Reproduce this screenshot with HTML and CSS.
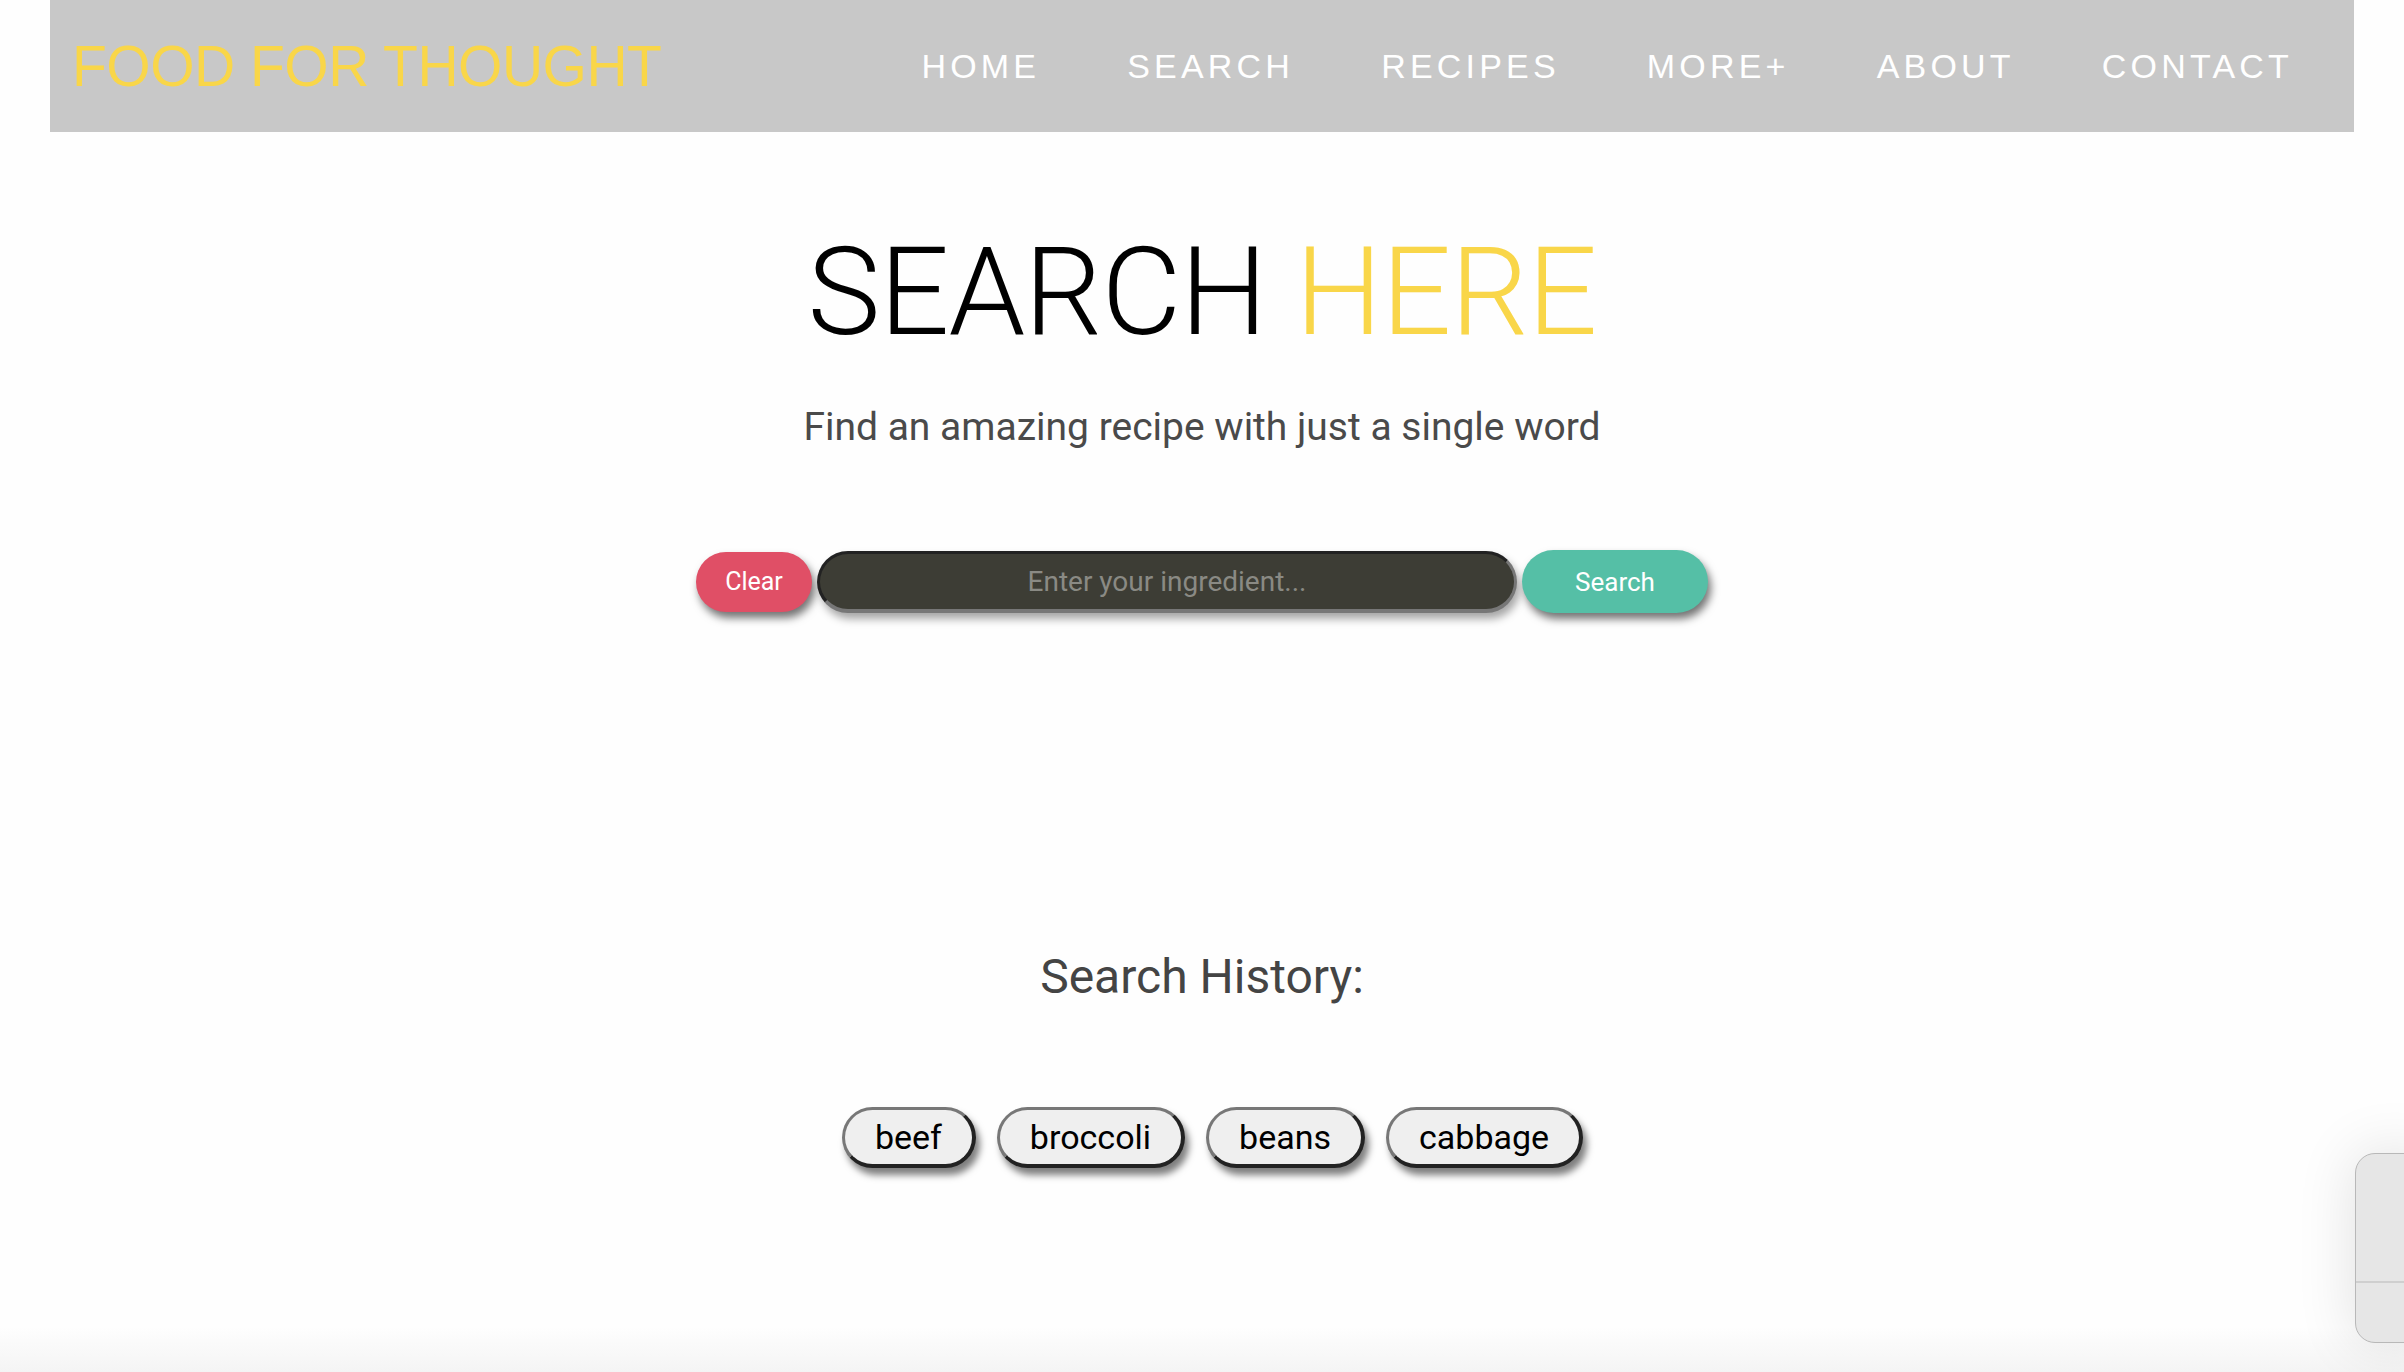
FILE: index.html
```html
<!DOCTYPE html>
<html lang="en">
<head>
<meta charset="utf-8">
<title>Food For Thought - Search</title>
<link rel="stylesheet" href="styles.css">
</head>
<body>
<header class="topbar">
  <div class="logo">FOOD FOR THOUGHT</div>
  <nav class="nav">
    <a class="nav-link" href="#">HOME</a>
    <a class="nav-link" href="#">SEARCH</a>
    <a class="nav-link" href="#">RECIPES</a>
    <a class="nav-link" href="#">MORE+</a>
    <a class="nav-link" href="#">ABOUT</a>
    <a class="nav-link" href="#">CONTACT</a>
  </nav>
</header>
<main class="hero">
  <h1 class="title">SEARCH <span class="accent">HERE</span></h1>
  <p class="subtitle">Find an amazing recipe with just a single word</p>
  <div class="search-row">
    <button class="btn btn-clear">Clear</button>
    <input class="search-input" type="text" placeholder="Enter your ingredient...">
    <button class="btn btn-search">Search</button>
  </div>
  <h2 class="history-title">Search History:</h2>
  <div class="chips">
    <button class="chip">beef</button>
    <button class="chip">broccoli</button>
    <button class="chip">beans</button>
    <button class="chip">cabbage</button>
  </div>
</main>
<div class="side-panel"><div class="side-panel-divider"></div></div>
</body>
</html>
```
FILE: styles.css
```css
* { box-sizing: border-box; }
html, body { margin: 0; padding: 0; }
body {
  min-height: 100vh;
  background: linear-gradient(to bottom, #fefefe calc(100% - 45px), #f4f4f4 100%);
  font-family: Roboto, "Liberation Sans", sans-serif;
  overflow: hidden;
}
.topbar {
  margin: 0 50px;
  height: 132px;
  background: #c8c8c8;
  display: flex;
  align-items: center;
  justify-content: space-between;
  padding: 0 61px 0 22px;
}
.logo {
  font-family: "Liberation Sans", Arial, sans-serif;
  font-size: 57px;
  color: #f9d649;
  letter-spacing: -0.5px;
}
.nav {
  display: flex;
  gap: 87px;
}
.nav-link {
  font-family: "Liberation Sans", Arial, sans-serif;
  font-size: 34px;
  letter-spacing: 4.2px;
  color: #ffffff;
  text-decoration: none;
}
.hero {
  display: flex;
  flex-direction: column;
  align-items: center;
}
.title {
  margin: 99px 0 0;
  font-family: Roboto, sans-serif;
  font-weight: 300;
  font-size: 123px;
  line-height: 1;
  color: #000;
  letter-spacing: -1px;
}
.accent { color: #f9d649; }
.subtitle {
  margin: 50px 0 0;
  font-family: Roboto, sans-serif;
  font-size: 39px;
  color: #4a4a4a;
}
.search-row {
  margin-top: 100px;
  display: flex;
  align-items: center;
  gap: 5px;
}
.btn {
  border: none;
  border-radius: 32px;
  color: #fff;
  font-family: Roboto, sans-serif;
  font-size: 25px;
  box-shadow: 3px 6px 8px rgba(0, 0, 0, 0.55);
}
.btn-clear {
  width: 116px;
  height: 60px;
  background: #e04f66;
}
.btn-search {
  width: 186px;
  height: 63px;
  font-size: 26px;
  background: #55bfa6;
}
.search-input {
  width: 700px;
  height: 62px;
  border-radius: 32px;
  border-style: solid;
  border-width: 3px 3px 4px 3px;
  border-color: #222 #777 #777 #222;
  background: #3d3d35;
  color: #ddd;
  font-family: Roboto, sans-serif;
  font-size: 28px;
  text-align: center;
  box-shadow: 3px 6px 8px rgba(0, 0, 0, 0.35);
  outline: none;
}
.search-input::placeholder { color: #8a8a84; }
.history-title {
  margin: 335px 0 0;
  font-family: Roboto, sans-serif;
  font-weight: 400;
  font-size: 48px;
  color: #444;
}
.chips {
  margin-top: 102px;
  padding-left: 21px;
  display: flex;
  gap: 21px;
}
.chip {
  height: 61px;
  padding: 0 30px;
  border-radius: 32px;
  border-style: solid;
  border-width: 3px 4px 4px 3px;
  border-color: #777 #222 #222 #777;
  background: #efefef;
  color: #000;
  font-family: Roboto, sans-serif;
  font-size: 34px;
  box-shadow: 4px 7px 7px rgba(0, 0, 0, 0.5);
}
.side-panel {
  position: absolute;
  left: 2355px;
  top: 1153px;
  width: 80px;
  height: 190px;
  background: #e6e6e6;
  border: 1px solid #b8b8b8;
  border-radius: 20px;
  box-shadow: 0 0 60px rgba(0, 0, 0, 0.12);
}
.side-panel-divider {
  margin-top: 127px;
  border-top: 2px solid #cfcfcf;
}
```
